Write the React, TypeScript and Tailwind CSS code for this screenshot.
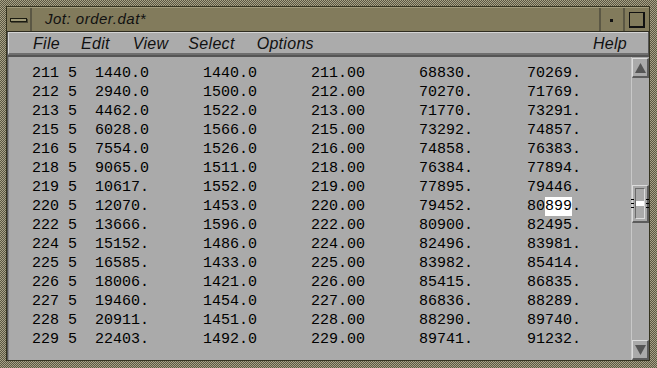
import React from "react";

const rows: string[][] = [
  ["211", "5", "1440.0", "1440.0", "211.00", "68830.", "70269."],
  ["212", "5", "2940.0", "1500.0", "212.00", "70270.", "71769."],
  ["213", "5", "4462.0", "1522.0", "213.00", "71770.", "73291."],
  ["215", "5", "6028.0", "1566.0", "215.00", "73292.", "74857."],
  ["216", "5", "7554.0", "1526.0", "216.00", "74858.", "76383."],
  ["218", "5", "9065.0", "1511.0", "218.00", "76384.", "77894."],
  ["219", "5", "10617.", "1552.0", "219.00", "77895.", "79446."],
  ["220", "5", "12070.", "1453.0", "220.00", "79452.", "80899."],
  ["222", "5", "13666.", "1596.0", "222.00", "80900.", "82495."],
  ["224", "5", "15152.", "1486.0", "224.00", "82496.", "83981."],
  ["225", "5", "16585.", "1433.0", "225.00", "83982.", "85414."],
  ["226", "5", "18006.", "1421.0", "226.00", "85415.", "86835."],
  ["227", "5", "19460.", "1454.0", "227.00", "86836.", "88289."],
  ["228", "5", "20911.", "1451.0", "228.00", "88290.", "89740."],
  ["229", "5", "22403.", "1492.0", "229.00", "89741.", "91232."],
];

function line(r: string[]) {
  return `${r[0]} ${r[1]}  ${r[2].padEnd(12)}${r[3].padEnd(12)}${r[4].padEnd(12)}${r[5].padEnd(12)}${r[6]}`;
}

export default function App() {
  return (
    <div className="w-[657px] h-[368px] flex pt-[6px] pl-[6px] pr-[7px] pb-[7px] bg-[repeating-conic-gradient(#5b5744_0%_25%,#a8a285_0%_50%)] bg-[length:2px_2px]">
      <div className="flex-1 flex flex-col border border-[#34321f] bg-[#827b5c]">
        {/* title bar */}
        <div className="h-[24px] flex items-stretch border-t border-[#a29c7d]">
          <div className="w-[25px] flex items-center justify-center border-r-2 border-r-[#5b5744]">
            <div className="w-[17px] h-[4px] border border-[#1a1a10] bg-[#9e9876] shadow-[1px_1px_0_#4a4636]" />
          </div>
          <div
            className="flex-1 flex items-center pl-[13px] text-[15px] italic tracking-[0.5px] text-[#111] pb-[1px]"
            style={{ fontFamily: '"Liberation Sans", Arial, sans-serif' }}
          >
            Jot: order.dat*
          </div>
          <div className="w-[24px] flex items-center justify-center border-l-2 border-l-[#5b5744]">
            <div className="w-[3px] h-[3px] bg-[#111] mr-[1px] mt-[2px]" />
          </div>
          <div className="w-[26px] flex items-center justify-center border-l-2 border-l-[#5b5744]">
            <div className="w-[16px] h-[16px] border border-[#111] border-r-2 border-b-2 mr-[1px]" />
          </div>
        </div>
        {/* client */}
        <div className="flex-1 flex flex-col bg-[#555555] border-t border-[#2e2c20]">
          <div
            className="h-[23px] mx-[1px] flex items-center bg-[#ababab] border-t border-l border-[#d4d4d4] border-b-2 border-b-[#6e6e6e] text-[16px] italic tracking-[0.3px] text-[#111] pl-[24px] pr-[21px] pt-[2px]"
            style={{ fontFamily: '"Liberation Sans", Arial, sans-serif' }}
          >
            <span>File</span>
            <span className="ml-[21px]">Edit</span>
            <span className="ml-[23px]">View</span>
            <span className="ml-[20px]">Select</span>
            <span className="ml-[22px]">Options</span>
            <span className="ml-auto">Help</span>
          </div>
          <div className="flex-1 flex mt-[2px] ml-[1px]">
            <div
              className="flex-1 bg-[#aaaaaa] pl-[23px] pt-[7px] text-[15px] leading-[19px] text-black whitespace-pre border-l border-[#8a8a8a]"
              style={{ fontFamily: '"Liberation Mono", "DejaVu Sans Mono", monospace' }}
            >
              {rows.map((r, i) =>
                r[0] === "220" ? (
                  <div key={i} className="h-[19px]">
                    {line(r).slice(0, -4)}
                    <span className="inline-block h-[19px] bg-white">899</span>.
                  </div>
                ) : (
                  <div key={i} className="h-[19px]">
                    {line(r)}
                  </div>
                )
              )}
            </div>
            {/* scrollbar */}
            <div className="w-[18px] flex flex-col bg-[#aaaaaa] border-l border-[#c8c8c8]">
              <div className="h-[20px] mt-[1px] flex items-center justify-center border-t border-l border-[#dcdcdc] border-b-2 border-r-2 border-b-[#5c5c5c] border-r-[#5c5c5c]">
                <svg width="11" height="10" viewBox="0 0 11 10">
                  <polygon points="5.5,0 11,10 0,10" fill="#555" />
                </svg>
              </div>
              <div className="flex-1 flex flex-col">
                <div className="relative mt-[107px] h-[38px] border-t border-l border-[#dcdcdc] border-b-2 border-r-2 border-b-[#5c5c5c] border-r-[#5c5c5c] flex p-[2px]">
                  <div className="flex-1 border border-t-[#6a6a6a] border-l-[#6a6a6a] border-b-[#dcdcdc] border-r-[#dcdcdc] flex items-center">
                    <div className="w-full h-[5px] bg-white" />
                  </div>
                  <div className="absolute left-[-2px] top-[13px] flex flex-col gap-[3px]">
                    <div className="w-[3px] h-[1px] bg-black" />
                    <div className="w-[3px] h-[1px] bg-black" />
                    <div className="w-[3px] h-[1px] bg-black" />
                  </div>
                  <div className="absolute right-[-2px] top-[13px] flex flex-col gap-[3px]">
                    <div className="w-[3px] h-[1px] bg-black" />
                    <div className="w-[3px] h-[1px] bg-black" />
                    <div className="w-[3px] h-[1px] bg-black" />
                  </div>
                </div>
              </div>
              <div className="h-[20px] flex items-center justify-center border-t border-l border-[#dcdcdc] border-b-2 border-r-2 border-b-[#5c5c5c] border-r-[#5c5c5c]">
                <svg width="11" height="10" viewBox="0 0 11 10">
                  <polygon points="0,0 11,0 5.5,10" fill="#555" />
                </svg>
              </div>
            </div>
          </div>
        </div>
      </div>
    </div>
  );
}
